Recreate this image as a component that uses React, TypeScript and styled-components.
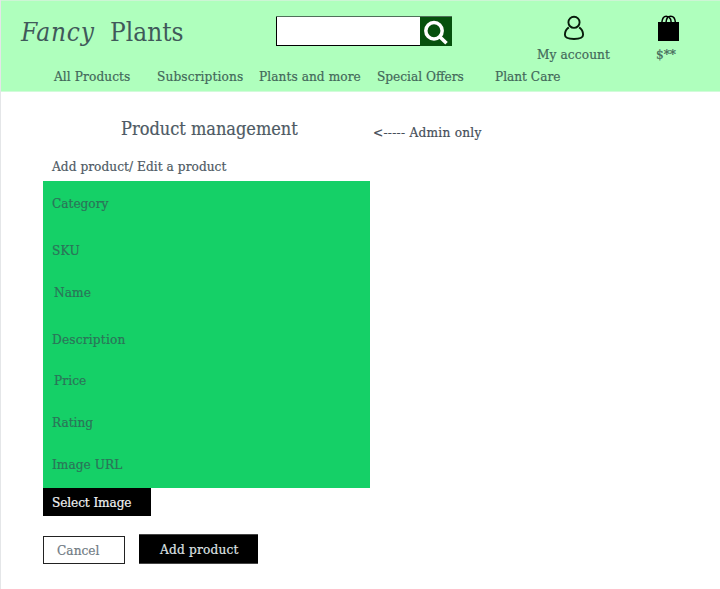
import React from "react";
import styled, { createGlobalStyle } from "styled-components";

const GlobalStyle = createGlobalStyle`
  * { box-sizing: border-box; }
  body {
    margin: 0;
    background: #fff;
    font-family: "DejaVu Serif Condensed", "DejaVu Serif", serif;
    font-stretch: condensed;
    font-size: 13.5px;
    line-height: 20px;
    color: #4e5a64;
    -webkit-text-stroke: 0.2px currentColor;
  }
`;

const Page = styled.div`
  width: 720px;
  height: 589px;
  overflow: hidden;
  border-left: 1px solid #e4e6e8;
  background: #fff;
`;

const Header = styled.header`
  height: 92px;
  background: #afffbd;
  border-top: 1px solid #cdf5d5;
  border-bottom: 1px solid #d2fbda;
  color: #43685a;
`;

const TopBar = styled.div`
  display: flex;
  height: 65px;
  padding-left: 20px;
`;

const Brand = styled.h1`
  display: flex;
  width: 255px;
  margin: 0;
  padding-top: 15px;
  font-size: 26px;
  line-height: 32px;
  font-weight: 400;
  color: #40595a;
  -webkit-text-stroke: 0;
`;

const BrandWord = styled.span<{ $width?: number; $italic?: boolean; $track: number }>`
  width: ${(p) => (p.$width ? `${p.$width}px` : "auto")};
  font-style: ${(p) => (p.$italic ? "italic" : "normal")};
  letter-spacing: ${(p) => p.$track}px;
  white-space: nowrap;
`;

const Search = styled.form`
  display: flex;
  width: 176px;
  height: 30px;
  margin-top: 15px;
  border-top: 1px solid #50705a;
`;

const SearchInput = styled.input`
  width: 144px;
  height: 29px;
  padding: 0 8px;
  border: solid #000;
  border-width: 0 0 1px 1px;
  border-radius: 0;
  outline: none;
  background: #fff;
  font: inherit;
`;

const SearchButton = styled.button`
  width: 32px;
  height: 29px;
  padding: 0;
  border: 0;
  background: #06500d;
  svg { display: block; }
`;

const Shortcut = styled.a<{ $offset: number; $width: number; $track: number }>`
  display: flex;
  flex-direction: column;
  width: ${(p) => p.$width}px;
  margin-left: ${(p) => p.$offset}px;
  padding-top: 13px;
  letter-spacing: ${(p) => p.$track}px;
  white-space: nowrap;
  svg { display: block; height: 30px; flex: none; }
`;

const Nav = styled.nav`
  display: flex;
  padding-left: 53px;
`;

const NavItem = styled.a<{ $slot: number; $track: number }>`
  flex: none;
  width: ${(p) => p.$slot}px;
  letter-spacing: ${(p) => p.$track}px;
  white-space: nowrap;
`;

const Main = styled.main`
  padding-left: 42px;
`;

const TitleRow = styled.div`
  display: flex;
  height: 64px;
  padding-left: 78px;
`;

const Title = styled.h2`
  width: 252px;
  margin: 0;
  padding-top: 25px;
  font-size: 18px;
  line-height: 24px;
  font-weight: 400;
  white-space: nowrap;
`;

const Note = styled.span`
  padding-top: 30px;
  letter-spacing: 0.27px;
  white-space: nowrap;
  color: #454e58;
`;

const Subtitle = styled.h3`
  height: 25px;
  margin: 0;
  padding-left: 9px;
  font-size: 13.5px;
  font-weight: 400;
  letter-spacing: 0.06px;
  white-space: nowrap;
`;

const Panel = styled.section`
  width: 327px;
  height: 307px;
  padding-top: 12px;
  background: #15d067;
  color: #2c7359;
`;

const Field = styled.div<{ $height: number; $indent: number; $track: number }>`
  height: ${(p) => p.$height}px;
  padding-left: ${(p) => p.$indent}px;
  letter-spacing: ${(p) => p.$track}px;
`;

type ButtonKind = "select" | "plain" | "solid";

const buttonLook: Record<ButtonKind, string> = {
  select: "border: 0; padding: 0 0 0 9px; background: #000; color: #f0f2f3; letter-spacing: -0.1px;",
  plain: "border: 1px solid #222; padding: 0 0 0 13px; background: #fff; color: #707b84; letter-spacing: 0.05px;",
  solid: "border: solid #444; border-width: 1px 0; padding: 0 0 0 21px; background: #000; color: #dfe2e4; letter-spacing: 0.2px;",
};

const Button = styled.button<{ $width: number; $height: number; $kind: ButtonKind }>`
  display: block;
  width: ${(p) => p.$width}px;
  height: ${(p) => p.$height}px;
  border-radius: 0;
  font: inherit;
  text-align: left;
  white-space: nowrap;
  ${(p) => buttonLook[p.$kind]}
`;

const Actions = styled.div`
  display: flex;
  align-items: flex-end;
  gap: 14px;
  margin-top: 18px;
`;

const navItems = [
  { label: "All Products", slot: 103, track: 0.1 },
  { label: "Subscriptions", slot: 102, track: 0.14 },
  { label: "Plants and more", slot: 118, track: 0.08 },
  { label: "Special Offers", slot: 118, track: 0 },
  { label: "Plant Care", slot: 80, track: 0 },
];

const fields = [
  { label: "Category", height: 47, indent: 9, track: 0 },
  { label: "SKU", height: 42, indent: 9, track: 0.3 },
  { label: "Name", height: 47, indent: 11, track: 0.1 },
  { label: "Description", height: 41, indent: 9, track: 0.2 },
  { label: "Price", height: 42, indent: 11, track: 0.1 },
  { label: "Rating", height: 42, indent: 9, track: 0 },
  { label: "Image URL", height: 30, indent: 9, track: 0.05 },
];

const SearchIcon = () => (
  <svg width="32" height="29" viewBox="0 0 32 29" fill="none" stroke="#fff">
    <circle cx="14" cy="13.7" r="8.2" strokeWidth="3.5" />
    <path d="M19.5 19.5L26.5 26.3" strokeWidth="3.6" />
  </svg>
);

const UserIcon = () => (
  <svg width="74" height="30" viewBox="0 0 74 30" fill="none" stroke="#061b0a" strokeWidth="1.9">
    <circle cx="37" cy="8.3" r="5.6" />
    <path d="M31.8 13.4C29.2 15.2 27.9 18 27.9 20.8C27.9 23.8 30 25 37 25S46.1 23.8 46.1 20.8C46.1 18 44.8 15.2 42.2 13.4" />
  </svg>
);

const BagIcon = () => (
  <svg width="26" height="30" viewBox="0 0 26 30" fill="none">
    <path d="M2 8H23V27H2Z" fill="#000" />
    <path d="M5.8 8.5C6.2 4.5 7.6 2.2 10.2 2.2C11.3 2.2 11.8 2.8 11.9 3.8M10 8.5C10.2 4.5 11.6 2.2 14.7 2.2C17.8 2.2 19.2 4.5 19.4 8.5M13.2 3.4C14.6 4.5 15.2 6.2 15.2 8.5" stroke="#000" strokeWidth="1.5" />
  </svg>
);

export default function App() {
  return (
    <>
      <GlobalStyle />
      <Page>
        <Header>
          <TopBar>
            <Brand>
              <BrandWord $italic $width={89} $track={0.8}>Fancy</BrandWord>
              <BrandWord $track={0}>Plants</BrandWord>
            </Brand>
            <Search>
              <SearchInput aria-label="Search" />
              <SearchButton type="button" aria-label="Search"><SearchIcon /></SearchButton>
            </Search>
            <Shortcut $offset={85} $width={74} $track={0.12}>
              <UserIcon />
              <span>My account</span>
            </Shortcut>
            <Shortcut $offset={45} $width={30} $track={0}>
              <BagIcon />
              <span>$**</span>
            </Shortcut>
          </TopBar>
          <Nav>
            {navItems.map((n) => (
              <NavItem key={n.label} $slot={n.slot} $track={n.track}>{n.label}</NavItem>
            ))}
          </Nav>
        </Header>
        <Main>
          <TitleRow>
            <Title>Product management</Title>
            <Note>&lt;----- Admin only</Note>
          </TitleRow>
          <Subtitle>Add product/ Edit a product</Subtitle>
          <Panel>
            {fields.map((f) => (
              <Field key={f.label} $height={f.height} $indent={f.indent} $track={f.track}>{f.label}</Field>
            ))}
          </Panel>
          <Button $kind="select" $width={108} $height={28}>Select Image</Button>
          <Actions>
            <Button $kind="plain" $width={82} $height={28}>Cancel</Button>
            <Button $kind="solid" $width={119} $height={30}>Add product</Button>
          </Actions>
        </Main>
      </Page>
    </>
  );
}
